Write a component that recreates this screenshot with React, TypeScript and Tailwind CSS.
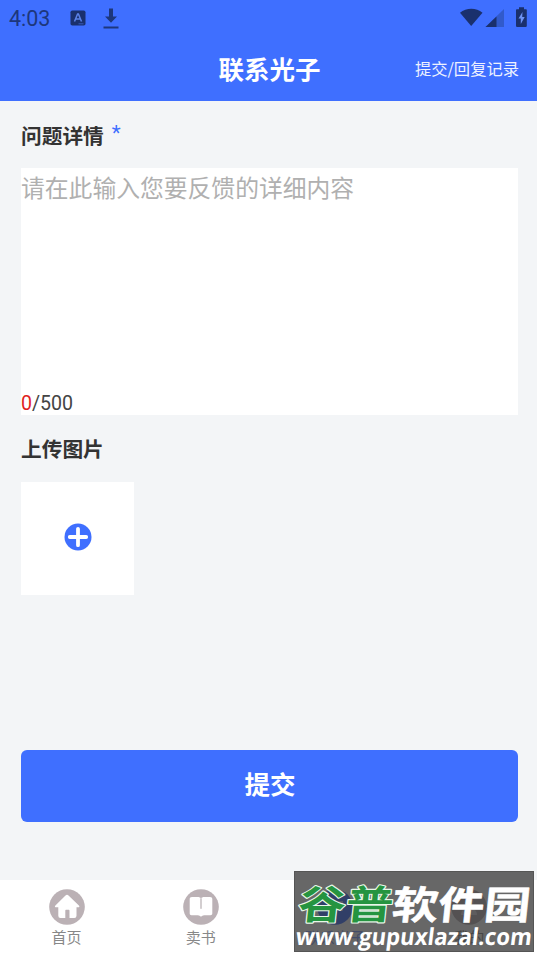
import type { ReactNode } from "react";

const HomeIcon = () => (
  <svg viewBox="0 0 36 36" className="h-9 w-9">
    <circle cx="18" cy="18" r="17.8" fill="#bbb1b5" />
    <path
      d="M16.500 6.500a2 2 0 0 1 3 0l10.400 9.900c1 1 .5 1.900-.8 1.900H27.500v8.500a2.200 2.200 0 0 1-2.200 2.200H20.500v-7.200c0-.6-.4-1-1-1h-2.200c-.6 0-1 .4-1 1v7.200h-4.800a2.200 2.200 0 0 1-2.200-2.200v-8.500H7.200c-1.300 0-1.800-.9-.8-1.900z"
      fill="#fff"
    />
  </svg>
);

const BookIcon = () => (
  <svg viewBox="0 0 36 36" className="h-9 w-9">
    <circle cx="18" cy="18" r="17.8" fill="#bbb1b5" />
    <path
      d="M9 8h5.500c1.800 0 3 .5 3.500 1.500.5-1 1.700-1.500 3.500-1.500H27c1.500 0 2.300.8 2.300 2v14.500c0 1-.7 1.700-1.800 1.700h-4.800c-2.200 0-3.400.4-4.700 1.600-1.300-1.200-2.500-1.600-4.700-1.600H8.500c-1.100 0-1.800-.7-1.800-1.700V10c0-1.200.8-2 2.300-2z"
      fill="#fff"
    />
    <path d="M18 9.300v10.500" stroke="#a79da1" strokeWidth="1" />
  </svg>
);

const ChatIcon = () => (
  <svg viewBox="0 0 36 36" className="h-9 w-9">
    <circle cx="18" cy="18" r="17.8" fill="#3f6fff" />
    <path d="M10 12h16v10h-8l-4 4v-4h-4z" fill="#a8bdff" />
  </svg>
);

const UserIcon = () => (
  <svg viewBox="0 0 36 36" className="h-9 w-9">
    <circle cx="18" cy="18" r="17.8" fill="#bbb1b5" />
    <circle cx="18" cy="13" r="4.5" fill="#e0dadd" />
    <path d="M10 26c0-10 16-10 16 0z" fill="#e0dadd" />
  </svg>
);

interface TabProps {
  icon: ReactNode;
  label: string;
  active?: boolean;
}

const Tab = ({ icon, label, active }: TabProps) => (
  <div className="flex flex-1 flex-col items-center pr-px pt-[9px]">
    {icon}
    <span
      className={`mt-px text-[15px] leading-[22px] ${
        active ? "text-[#7f9fff]" : "text-[#888]"
      }`}
    >
      {label}
    </span>
  </div>
);

const StatusBar = () => (
  <div className="flex h-9 items-center justify-between px-[9px]">
    <div className="flex items-center">
      <span className="w-[61px] pt-px font-[Roboto] text-[21.5px] leading-9 text-[#1d377c]">
        4:03
      </span>
      <svg viewBox="0 0 16 16" className="h-4 w-4">
        <rect x=".5" y=".5" width="15" height="15" rx="1.8" fill="#1a306d" />
        <path
          d="M4.500 11.500 7.600 4h.8l3.100 7.500M5.700 9h4.600"
          fill="none"
          stroke="#5b82e8"
          strokeWidth="1.5"
        />
        <path d="M8.500 13.800h5" stroke="#4065c9" strokeWidth=".8" />
      </svg>
      <svg viewBox="0 0 16 22" className="ml-[17px] h-[22px] w-4">
        <path d="M6 1.500h4V9.500h4L8 15.700 2 9.500h4z" fill="#1d377c" />
        <path d="M.5 20.500h15" stroke="#1d377c" strokeWidth="2" />
      </svg>
    </div>
    <svg viewBox="0 0 70 24" className="h-6 w-[70px]">
      <path d="M2 6.700C8.300 1.300 18.300 1.300 24.500 6.700L13.200 20z" fill="#1a306d" />
      <path d="M46 3v18H27.500z" fill="#315acb" />
      <path d="M38.500 10.400V21H27.500z" fill="#1a306d" />
      <path
        d="M61 1.300h5v2h2c.5 0 .8.3.8.8v16c0 .5-.3.8-.8.8h-9.200c-.5 0-.8-.3-.8-.8v-16c0-.5.3-.8.8-.8H61z"
        fill="#1a306d"
      />
      <path d="m64.500 6-4 6.500h2.300V18l3.900-7h-2.500z" fill="#6d92f5" />
    </svg>
  </div>
);

const Watermark = () => (
  <div className="absolute left-[294px] top-[871px] h-[81px] w-[240px] border border-[#555] bg-[#2c2c2c]/72">
    <svg viewBox="0 0 240 81" className="-ml-px -mt-px h-[81px] w-[240px] overflow-visible">
      <g
        className="font-['Noto_Sans_CJK_SC',sans-serif] font-bold"
        strokeLinejoin="round"
      >
        <text
          transform="translate(3 48) skewX(-6) scale(1.080 .900)"
          fontSize="44"
          textLength="88"
          fill="#259440"
          stroke="#e8f7e8"
          strokeWidth="2.4"
          paintOrder="stroke"
        >
          谷普
        </text>
        <text
          transform="translate(97 48) skewX(-6) scale(1.070 .900)"
          fontSize="43"
          textLength="129"
          fill="#fff"
          stroke="#fff"
          strokeWidth=".6"
        >
          软件园
        </text>
      </g>
      <text
        transform="translate(1 73.500) skewX(-7)"
        textLength="236"
        lengthAdjust="spacingAndGlyphs"
        className="font-['Open_Sans',sans-serif] font-bold"
        fontSize="23.5"
        fill="#fff"
      >
        www.gupuxlazal.com
      </text>
    </svg>
  </div>
);

const App = () => {
  return (
    <div className="relative flex h-[956px] w-[537px] flex-col bg-[#f3f5f7] font-['Noto_Sans_CJK_SC',sans-serif]">
      {/* Header */}
      <header className="h-[101px] bg-[#3f6fff] text-white">
        <StatusBar />
        <div className="grid h-[65px] grid-cols-[1fr_auto_1fr] items-center pr-[18px]">
          <span />
          <h1 className="ml-5 text-[25.5px] font-bold">联系光子</h1>
          <span className="text-right text-[16.3px] text-[#eef2ff]">提交/回复记录</span>
        </div>
      </header>

      {/* Feedback form */}
      <main className="flex flex-1 flex-col px-[21px]">
        <h2 className="mt-5 flex h-[30px] items-center text-[20.7px] font-bold text-[#333]">
          问题详情
          <span className="mb-1 ml-2 font-[Roboto] font-normal text-[#3f6fff]">*</span>
        </h2>
        <div className="mt-[17px] flex h-[247px] w-[497px] flex-col justify-between bg-white">
          <p className="text-[23.8px] leading-[37px] text-[#b0b0b0]">
            请在此输入您要反馈的详细内容
          </p>
          <p className="font-[Roboto] text-[19.6px] leading-[23px] text-[#444]">
            <span className="text-[#e01e1e]">0</span>/500
          </p>
        </div>

        <h2 className="mt-[18px] h-[30px] text-[20.7px] font-bold leading-[30px] text-[#333]">
          上传图片
        </h2>
        <div className="mt-[19px] flex h-[113px] w-[113px] items-center justify-center bg-white">
          <svg viewBox="0 0 28 28" className="-mt-[3px] h-7 w-7">
            <circle cx="14" cy="14" r="13.5" fill="#3f6fff" />
            <path
              d="M14 5.800v16.400M5.800 14h16.400"
              stroke="#fff"
              strokeWidth="3.8"
              strokeLinecap="round"
            />
          </svg>
        </div>

        <button className="mt-[155px] flex h-[72px] w-[497px] items-center justify-center rounded-[6px] bg-[#3f6fff] pb-1.5 pl-px text-[25.5px] font-bold text-white">
          提交
        </button>
      </main>

      {/* Bottom tabs */}
      <nav className="flex h-[76px] bg-white">
        <Tab icon={<HomeIcon />} label="首页" />
        <Tab icon={<BookIcon />} label="卖书" />
        <Tab icon={<ChatIcon />} label="联系光子" active />
        <Tab icon={<UserIcon />} label="我的" />
      </nav>

      <Watermark />
    </div>
  );
};

export default App;
